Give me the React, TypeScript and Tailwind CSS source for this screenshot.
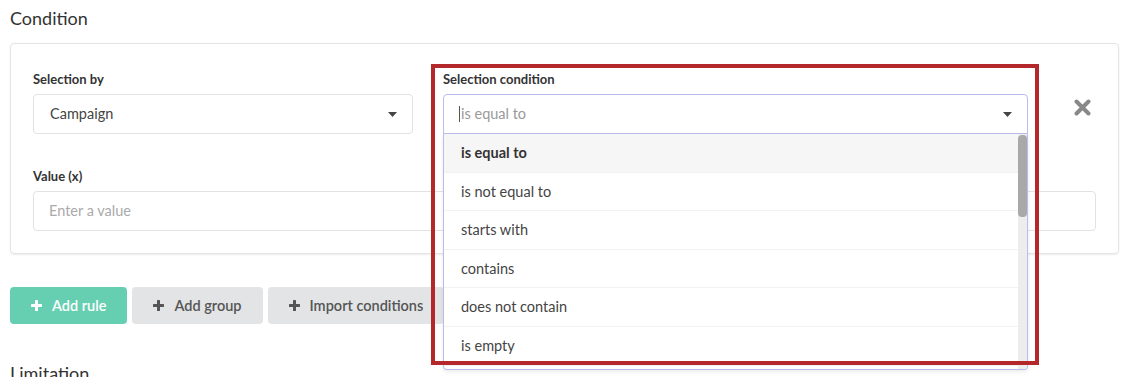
import type { ReactNode } from 'react';

const options = [
  'is equal to',
  'is not equal to',
  'starts with',
  'contains',
  'does not contain',
  'is empty',
  'is not empty'
];

function Caret() {
  return (
    <svg width="9" height="5" viewBox="0 0 9 5" className="shrink-0">
      <path d="M0 0h9L4.5 5z" fill="#444" />
    </svg>);
}

function PlusIcon({ color }: { color: string }) {
  return (
    <svg width="11" height="11" viewBox="0 0 11 11" className="shrink-0">
      <rect x="4" y="0" width="3" height="11" rx="0.6" fill={color} />
      <rect x="0" y="4" width="11" height="3" rx="0.6" fill={color} />
    </svg>);
}

function TimesIcon() {
  return (
    <svg width="17" height="17" viewBox="0 0 17 17">
      <path d="M2.5 2.5L14.5 14.5M14.5 2.5L2.5 14.5" stroke="#888" strokeWidth="4" strokeLinecap="round" />
    </svg>);
}

function Label({ children }: { children: ReactNode }) {
  return <p className="mb-[7px] text-[13px] font-bold leading-[16px] text-[#333]">{children}</p>;
}

function Button({ children, primary }: { children: ReactNode; primary?: boolean }) {
  return (
    <button
      className={
      primary ?
      'flex h-[37px] items-center gap-[10px] rounded-[4px] bg-[#67cfb1] px-[21px] text-[14.5px] font-semibold text-white' :
      'flex h-[37px] items-center gap-[10px] rounded-[4px] bg-[#e3e4e6] px-[21px] text-[14.5px] font-semibold text-[#555]'
      }>
      <PlusIcon color={primary ? '#ffffff' : '#555555'} />
      {children}
    </button>);
}

export default function App() {
  return (
    <div className="relative h-[377px] w-[1127px] overflow-hidden bg-white pl-[10px] pr-[8px] pt-[6px] font-['Lato',sans-serif] text-[#333]">
      <h2 className="text-[18px] leading-[24px] text-[#333]">Condition</h2>

      <div className="mt-[13px] rounded-[4px] border border-[#e4e4e4] px-[22px] pb-[22px] pt-[27px] shadow-[0_1px_2px_rgba(0,0,0,0.08)]">
        <div className="flex">
          <div className="w-[380px]">
            <Label>Selection by</Label>
            <div className="flex h-[40px] items-center justify-between rounded-[4px] border border-[#e2e2e2] pl-[16px] pr-[15px] text-[14.5px] text-[#444]">
              Campaign
              <Caret />
            </div>
          </div>

          <div className="relative ml-[30px] w-[585px]">
            <Label>Selection condition</Label>
            <div className="flex h-[40px] items-center justify-between rounded-t-[4px] border border-[#b9bde9] pl-[15px] pr-[15px] text-[14.5px] text-[#999]">
              <span className="flex items-center">
                <span className="mr-[1px] h-[16px] w-px bg-[#555]" />
                is equal to
              </span>
              <Caret />
            </div>

            <div className="absolute left-0 top-[63px] z-10 h-[236px] w-[585px] overflow-hidden rounded-b-[4px] border border-t-0 border-[#b9bde9] bg-white shadow-[0_2px_4px_rgba(0,0,0,0.08)]">
              <div className="flex">
                <ul className="flex-1">
                  {options.map((o, i) =>
                  <li
                    key={o}
                    className={
                    i === 0 ?
                    'flex h-[38.6px] items-center border-b border-[#f2f2f2] bg-[#f6f6f6] pl-[17px] text-[14.5px] font-bold text-[#333]' :
                    'flex h-[38.6px] items-center border-b border-[#f2f2f2] pl-[17px] text-[14.5px] text-[#444]'
                    }>
                    {o}
                  </li>
                  )}
                </ul>
                <div className="w-[9px] bg-[#ededed] pt-[1px]">
                  <div className="h-[82px] rounded-[4px] bg-[#a9a9a9]" />
                </div>
              </div>
            </div>
          </div>

          <div className="flex flex-1 justify-end pr-[5px] pt-[28px]">
            <TimesIcon />
          </div>
        </div>

        <div className="mt-[34px]">
          <Label>Value (x)</Label>
          <div className="flex h-[40px] items-center rounded-[4px] border border-[#e2e2e2] pl-[15px] text-[14.5px] text-[#aaa]">
            Enter a value
          </div>
        </div>
      </div>

      <div className="mt-[33px] flex gap-[5px]">
        <Button primary>Add rule</Button>
        <Button>Add group</Button>
        <Button>Import conditions</Button>
      </div>

      <h2 className="mt-[37px] text-[18px] leading-[24px] text-[#333]">Limitation</h2>

      <div className="pointer-events-none absolute left-[431px] top-[64px] z-20 h-[301px] w-[608px] border-[4px] border-[#b4282b]" />
    </div>);
}
